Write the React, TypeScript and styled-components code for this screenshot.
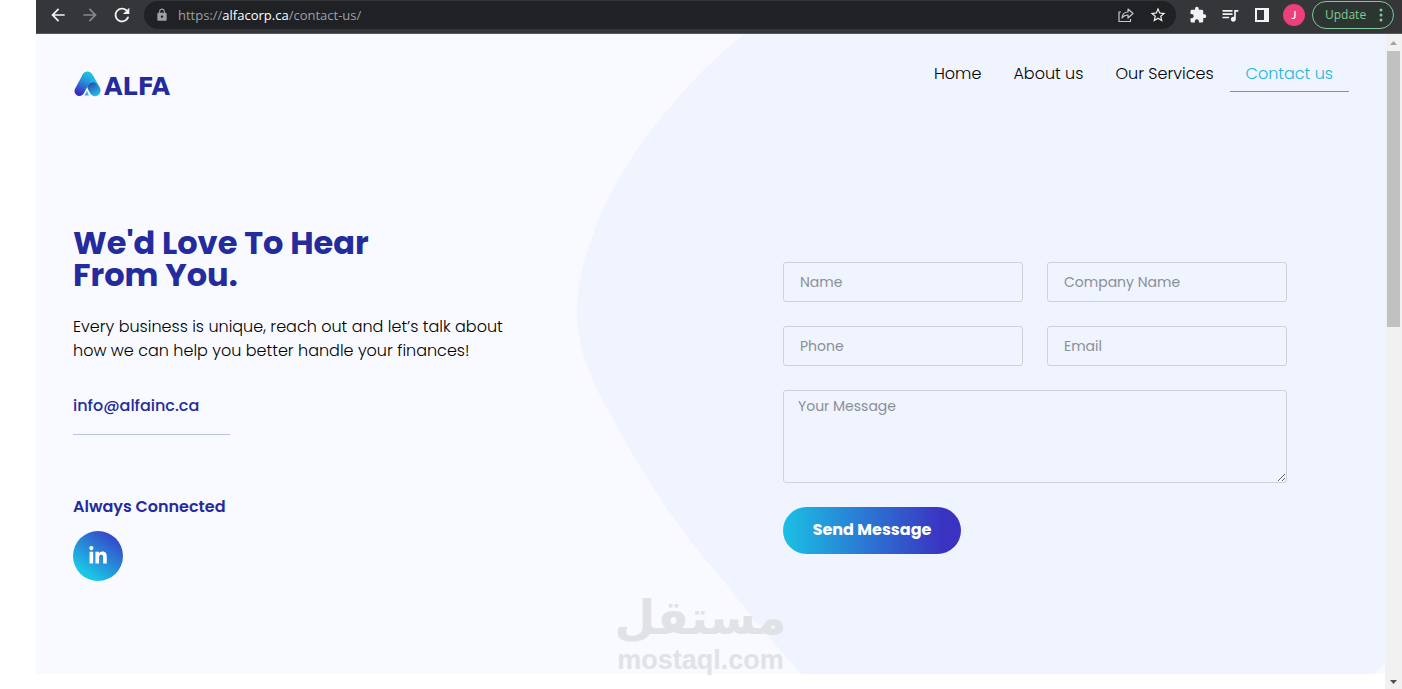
import React from "react";
import styled, { createGlobalStyle } from "styled-components";
import {
  MdArrowBack,
  MdArrowForward,
  MdExtension,
  MdLock,
  MdQueueMusic,
  MdRefresh,
  MdStarBorder,
} from "react-icons/md";
import { FaLinkedinIn } from "react-icons/fa";

const GlobalStyle = createGlobalStyle`
  *, *::before, *::after { box-sizing: border-box; }
  body {
    margin: 0;
    background: #fff;
    font-family: Poppins, Inter, "Liberation Sans", sans-serif;
    font-size: 16px;
    color: #000;
  }
`;

const Frame = styled.div`
  display: flex;
  flex-direction: column;
  min-height: 100vh;
  margin-left: 36px;
`;

/* Browser toolbar */
const Toolbar = styled.header`
  display: flex;
  align-items: center;
  height: 34px;
  padding: 0 8px 4px 6px;
  background: #35363a;
  border-bottom: 1px solid #59575c;
`;

const ToolButton = styled.button<{ $dim?: boolean }>`
  display: flex;
  align-items: center;
  justify-content: center;
  width: 32px;
  height: 28px;
  padding: 0;
  border: 0;
  background: none;
  color: ${(p) => (p.$dim ? "#84898c" : "#f1f3f4")};
`;

const AddressBar = styled.div`
  display: flex;
  flex: 1;
  align-items: center;
  height: 28px;
  margin: 0 6px;
  padding: 0 2px 0 11px;
  border-radius: 14px;
  background: #202124;
  color: #9aa0a6;
`;

const Url = styled.span`
  flex: 1;
  padding-left: 9px;
  font: 13px/20px "Open Sans", "Noto Sans", sans-serif;
  white-space: nowrap;
  strong {
    font-weight: 400;
    color: #fff;
  }
`;

const Avatar = styled.button`
  width: 22px;
  height: 22px;
  margin: 0 7px 0 5px;
  padding: 0;
  border: 0;
  border-radius: 50%;
  background: #ec407a;
  color: #fff;
  font: 12px/22px Lato, sans-serif;
`;

const UpdateButton = styled.button`
  display: flex;
  align-items: center;
  justify-content: space-between;
  width: 82px;
  height: 28px;
  padding: 0 10px 0 12px;
  border: 1px solid #81c995;
  border-radius: 14px;
  background: #2d3532;
  color: #81c995;
  font: 12px/20px "Open Sans", sans-serif;
`;

/* Page area with its scrollbar */
const Viewport = styled.div`
  display: flex;
  flex: 1;
`;

const Content = styled.div`
  flex: 1;
  min-width: 0;
`;

const Page = styled.main`
  position: relative;
  min-height: 640px;
  background: #f8faff;
`;

const Backdrop = styled.svg`
  position: absolute;
  inset: 0;
  width: 100%;
  height: 100%;
`;

const SiteHeader = styled.div`
  position: relative;
  display: flex;
  justify-content: space-between;
  align-items: flex-start;
  padding: 21px 36px 0 38px;
`;

const Logo = styled.a`
  display: flex;
  align-items: flex-end;
  gap: 2px;
  margin-top: 16px;
  height: 26px;
  color: #242b9c;
  font: 700 24px/20px "DejaVu Sans", sans-serif;
  text-decoration: none;
`;

const Nav = styled.nav`
  display: flex;
`;

const NavLink = styled.a<{ $active?: boolean }>`
  padding: 7px 16px 5px;
  border-bottom: 1px solid ${(p) => (p.$active ? "#23b5dc" : "transparent")};
  color: ${(p) => (p.$active ? "#23b5dc" : "#000")};
  font-weight: 300;
  line-height: 24px;
  text-decoration: none;
`;

const Hero = styled.div`
  position: relative;
  display: flex;
  align-items: flex-start;
  justify-content: space-between;
  gap: 48px;
  padding: 130px 98px 92px 37px;
`;

const Intro = styled.section`
  flex: 0 1 450px;
`;

const Title = styled.h1`
  margin: 0 0 24px;
  max-width: 320px;
  color: #242b9c;
  font-size: 32px;
  font-weight: 700;
  line-height: 32px;
`;

const Lead = styled.p`
  margin: 0 0 31px;
  font-weight: 300;
  line-height: 24px;
`;

const EmailLink = styled.a`
  display: block;
  width: 157px;
  padding-bottom: 16px;
  border-bottom: 1px solid #b9c3ea;
  color: #242b9c;
  font-weight: 500;
  line-height: 24px;
  text-decoration: none;
`;

const Connected = styled.h2`
  margin: 60px 0 12px;
  color: #242b9c;
  font-size: 16px;
  font-weight: 600;
  line-height: 24px;
`;

const SocialLink = styled.a`
  display: flex;
  align-items: center;
  justify-content: center;
  width: 50px;
  height: 50px;
  border-radius: 50%;
  background: linear-gradient(35deg, #1bc5e6 20%, #3a35c4 95%);
  color: #fff;
`;

const Form = styled.form`
  display: grid;
  flex: 0 1 504px;
  grid-template-columns: 1fr 1fr;
  gap: 24px;
  margin-top: 35px;
`;

const fieldStyle = `
  display: block;
  width: 100%;
  border: 1px solid #cdd2dd;
  border-radius: 3px;
  background: transparent;
  color: #000;
  font-family: inherit;
  font-size: 14px;
  font-weight: 400;
  line-height: 22px;
  &::placeholder { color: #8b8f97; opacity: 1; }
`;

const TextField = styled.input`
  ${fieldStyle}
  height: 40px;
  padding: 0 16px;
`;

const MessageField = styled.textarea`
  ${fieldStyle}
  grid-column: 1 / -1;
  height: 93px;
  padding: 4px 14px;
  resize: vertical;
`;

const SendButton = styled.button`
  justify-self: start;
  width: 178px;
  height: 47px;
  padding: 0 0 2px;
  border: 0;
  border-radius: 24px;
  background: linear-gradient(90deg, #1bc0e4, #3a33c2 90%);
  color: #fff;
  font: inherit;
  font-weight: 700;
  white-space: nowrap;
`;

/* Overlaid site watermark */
const Watermark = styled.div`
  position: absolute;
  left: 50%;
  bottom: 0;
  display: flex;
  flex-direction: column;
  align-items: center;
  width: 172px;
  margin-left: -96px;
  color: #e0e2e5;
  white-space: nowrap;
`;

const WatermarkArabic = styled.span`
  font: 700 47px/56px "DejaVu Sans", sans-serif;
`;

const WatermarkLatin = styled.span`
  font: 700 27px/28px "Liberation Sans", sans-serif;
`;

const Scrollbar = styled.div`
  display: flex;
  flex-direction: column;
  align-items: center;
  width: 17px;
  background: #f1f1f1;
`;

const ScrollThumb = styled.div`
  width: 13px;
  height: 276px;
  margin-bottom: auto;
  background: #c1c1c1;
`;

const ScrollArrow = styled.svg`
  display: block;
  flex: none;
  width: 17px;
  height: 17px;
`;

const ShareIcon = () => (
  <svg width="18" height="18" viewBox="0 0 18 18" fill="none" stroke="#c4c7ca" strokeWidth="1.2">
    <path d="M4 6H2v9.500h11.500V13" />
    <path d="M5 12c.4-4 2.500-6 6-6V3l5 4.500-5 4.500V9c-2.500 0-4.500.8-6 3z" strokeLinejoin="round" />
  </svg>
);

const SidePanelIcon = () => (
  <svg width="14" height="14" viewBox="0 0 14 14">
    <path d="M0 0h14v14H0z" fill="#f1f3f4" />
    <path d="M2 2h7v10H2z" fill="#35363a" />
  </svg>
);

const MenuDots = () => (
  <svg width="4" height="14" viewBox="0 0 4 14" fill="currentColor">
    <circle cx="2" cy="2" r="1.500" />
    <circle cx="2" cy="7" r="1.500" />
    <circle cx="2" cy="12" r="1.500" />
  </svg>
);

const LogoMark = () => (
  <svg width="28" height="26" viewBox="0 0 28 26" fill="none" strokeLinecap="round">
    <defs>
      <linearGradient id="markLeft" x1="5" y1="22" x2="14" y2="3" gradientUnits="userSpaceOnUse">
        <stop stopColor="#3a2fc0" />
        <stop offset="0.500" stopColor="#2a7fd4" />
        <stop offset="1" stopColor="#1fc0e4" />
      </linearGradient>
      <linearGradient id="markRight" x1="17" y1="13" x2="23" y2="23" gradientUnits="userSpaceOnUse">
        <stop stopColor="#2857b8" />
        <stop offset="1" stopColor="#25b4e2" />
      </linearGradient>
    </defs>
    <path d="M13.500 6 21 19" stroke="#22b7e1" strokeWidth="11" />
    <path d="M13 6 5.500 20" stroke="url(#markLeft)" strokeWidth="10" />
    <path d="M19 16.500 21 20" stroke="url(#markRight)" strokeWidth="10.500" />
    <path d="M13 20 15 24.500H10.500z" fill="#2bb9e4" />
  </svg>
);

const navItems = ["Home", "About us", "Our Services", "Contact us"];

export default function App() {
  return (
    <>
      <GlobalStyle />
      <Frame>
        <Toolbar>
          <ToolButton aria-label="Back"><MdArrowBack size={20} /></ToolButton>
          <ToolButton aria-label="Forward" $dim><MdArrowForward size={20} /></ToolButton>
          <ToolButton aria-label="Reload"><MdRefresh size={22} /></ToolButton>
          <AddressBar>
            <MdLock size={14} />
            <Url>https://<strong>alfacorp.ca</strong>/contact-us/</Url>
            <ToolButton aria-label="Share"><ShareIcon /></ToolButton>
            <ToolButton aria-label="Bookmark"><MdStarBorder size={18} /></ToolButton>
          </AddressBar>
          <ToolButton aria-label="Extensions"><MdExtension size={18} /></ToolButton>
          <ToolButton aria-label="Media"><MdQueueMusic size={20} /></ToolButton>
          <ToolButton aria-label="Side panel"><SidePanelIcon /></ToolButton>
          <Avatar>J</Avatar>
          <UpdateButton>Update <MenuDots /></UpdateButton>
        </Toolbar>
        <Viewport>
          <Content>
            <Page>
              <Backdrop viewBox="0 0 1349 640" preserveAspectRatio="none" aria-hidden="true">
                <path
                  fill="#eff4ff"
                  d="M709 0C672 28 650 54 631 77C612 98 597 120 584 143C572 162 563 182 557 201C547 228 541 250 541 278C541 315 556 348 571 374C590 410 610 444 634 479C655 509 670 526 687 546C710 577 735 606 765 640H1338L1349 629V0Z"
                />
              </Backdrop>
              <Watermark>
                <WatermarkArabic lang="ar" dir="rtl">مستقل</WatermarkArabic>
                <WatermarkLatin>mostaql.com</WatermarkLatin>
              </Watermark>
              <SiteHeader>
                <Logo href="#"><LogoMark />ALFA</Logo>
                <Nav>
                  {navItems.map((item) => (
                    <NavLink key={item} href="#" $active={item === "Contact us"}>{item}</NavLink>
                  ))}
                </Nav>
              </SiteHeader>
              <Hero>
                <Intro>
                  <Title>We'd Love To Hear From You.</Title>
                  <Lead>Every business is unique, reach out and let’s talk about how we can help you better handle your finances!</Lead>
                  <EmailLink href="mailto:info@alfainc.ca">info@alfainc.ca</EmailLink>
                  <Connected>Always Connected</Connected>
                  <SocialLink href="#" aria-label="LinkedIn"><FaLinkedinIn size={20} /></SocialLink>
                </Intro>
                <Form onSubmit={(e) => e.preventDefault()}>
                  <TextField aria-label="Name" placeholder="Name" />
                  <TextField aria-label="Company Name" placeholder="Company Name" />
                  <TextField aria-label="Phone" type="tel" placeholder="Phone" />
                  <TextField aria-label="Email" type="email" placeholder="Email" />
                  <MessageField aria-label="Your Message" placeholder="Your Message" />
                  <SendButton type="submit">Send Message</SendButton>
                </Form>
              </Hero>
            </Page>
          </Content>
          <Scrollbar aria-hidden="true">
            <ScrollArrow viewBox="0 0 17 17"><path d="M5 11 8.500 7 12 11z" fill="#a3a3a3" /></ScrollArrow>
            <ScrollThumb />
            <ScrollArrow viewBox="0 0 17 17"><path d="M5 8 8.500 12 12 8z" fill="#505050" /></ScrollArrow>
          </Scrollbar>
        </Viewport>
      </Frame>
    </>
  );
}
